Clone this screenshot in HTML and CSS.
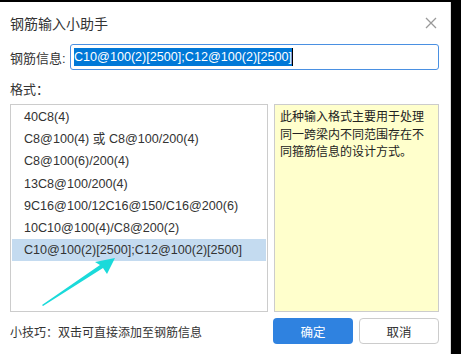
FILE: index.html
```html
<!DOCTYPE html>
<html lang="zh">
<head>
    <meta charset="UTF-8">
    <title>钢筋输入小助手</title>
    <link rel="stylesheet" href="styles.css">
</head>
<body>
    <div class="dialog">
        <div class="header">
            <span class="title">钢筋输入小助手</span>
            <svg class="close" width="12" height="12" viewBox="0 0 12 12">
                <path d="M1 1 L11 11 M11 1 L1 11" stroke="#999" stroke-width="1.3" fill="none"/>
            </svg>
        </div>

        <div class="field">
            <label>钢筋信息:</label>
            <div class="input"><span class="sel">C10@100(2)[2500];C12@100(2)[2500]</span><span class="caret"></span></div>
        </div>

        <div class="section">格式：</div>

        <div class="panes">
            <ul class="list">
                <li>40C8(4)</li>
                <li>C8@100(4) 或 C8@100/200(4)</li>
                <li>C8@100(6)/200(4)</li>
                <li>13C8@100/200(4)</li>
                <li>9C16@100/12C16@150/C16@200(6)</li>
                <li>10C10@100(4)/C8@200(2)</li>
                <li class="active">C10@100(2)[2500];C12@100(2)[2500]</li>
            </ul>
            <div class="note">此种输入格式主要用于处理同一跨梁内不同范围存在不同箍筋信息的设计方式。</div>
        </div>

        <div class="footer">
            <span class="tip">小技巧：双击可直接添加至钢筋信息</span>
            <div class="buttons">
                <button class="ok">确定</button>
                <button class="cancel">取消</button>
            </div>
        </div>

        <!-- annotation arrow -->
        <svg class="arrow" width="461" height="354" viewBox="0 0 461 354">
            <polygon points="42,305 100,265 95,262 115,258 107,274 103,268 43,306" fill="#1adada"/>
        </svg>
    </div>
</body>
</html>
```

FILE: styles.css
```css
body {
    margin: 0;
    background-color: #000;
    font-family: "Liberation Sans", "Noto Sans CJK SC", sans-serif;
    font-size: 12px;
    color: #333;
}
.dialog {
    position: relative;
    width: 451px;
    height: 352px;
    margin-top: 2px;
    background-color: #fff;
    border-right: 1px solid #ddd;
    box-sizing: border-box;
    padding: 0 0 0 10px;
}
.header {
    display: flex;
    align-items: center;
    justify-content: space-between;
    height: 42px;
    padding-right: 13px;
}
.title {
    font-size: 14px;
}
.close {
    display: block;
}
.field {
    display: flex;
    align-items: center;
    height: 26px;
}
.field label {
    width: 60px;
    font-size: 13px;
}
.input {
    width: 369px;
    height: 26px;
    box-sizing: border-box;
    border: 1px solid #4a90e2;
    border-radius: 3px;
    display: flex;
    align-items: center;
    padding-left: 3px;
}
.sel {
    background-color: #0078d7;
    color: #fff;
    line-height: 18px;
    font-size: 12.6px;
}
.caret {
    width: 1px;
    height: 18px;
    background-color: #000;
}
.section {
    margin-top: 10px;
    height: 24px;
    line-height: 20px;
    font-size: 13px;
}
.panes {
    display: flex;
    gap: 6px;
    height: 208px;
}
.list {
    list-style: none;
    margin: 0;
    padding: 1px 1px;
    width: 258px;
    box-sizing: border-box;
    border: 1px solid #ccc;
    font-size: 12.6px;
}
.list li {
    height: 22.2px;
    line-height: 22px;
    padding-left: 12px;
    white-space: nowrap;
}
.list li.active {
    background-color: #c4dbf0;
}
.note {
    width: 165px;
    box-sizing: border-box;
    border: 1px solid #ccc;
    background-color: #ffffcc;
    padding: 4px 8px 4px 5px;
    line-height: 17.5px;
    color: #222;
}
.footer {
    display: flex;
    align-items: center;
    justify-content: space-between;
    margin-top: 6px;
    padding-right: 11px;
}
.tip {
    font-size: 12px;
}
.buttons {
    display: flex;
    gap: 6px;
}
button {
    width: 80px;
    height: 26px;
    border-radius: 4px;
    font-family: inherit;
    font-size: 12.5px;
    cursor: pointer;
}
.ok {
    background-color: #2f82e0;
    color: #fff;
    border: none;
}
.cancel {
    background-color: #fff;
    color: #333;
    border: 1px solid #ccc;
}
.arrow {
    position: absolute;
    left: 0;
    top: -2px;
    pointer-events: none;
}
```
